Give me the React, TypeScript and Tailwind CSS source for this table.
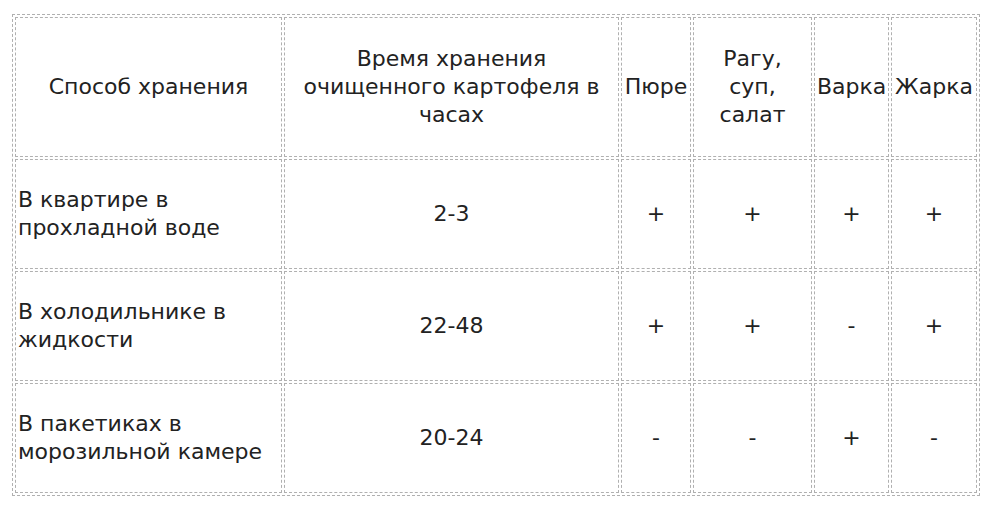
const header = [
  ["Способ хранения"],
  ["Время хранения", "очищенного картофеля в", "часах"],
  ["Пюре"],
  ["Рагу,", "суп,", "салат"],
  ["Варка"],
  ["Жарка"],
];

const rows = [
  { name: "В квартире в прохладной воде", time: "2-3", marks: ["+", "+", "+", "+"] },
  { name: "В холодильнике в жидкости", time: "22-48", marks: ["+", "+", "-", "+"] },
  { name: "В пакетиках в морозильной камере", time: "20-24", marks: ["-", "-", "+", "-"] },
];

const widths = ["w-[267px]", "w-[335px]", "w-[70px]", "w-[119px]", "w-[75px]", "w-[86px]"];

const cell = "border border-dashed border-[#b0b0b0] p-[2px]";

export default function App() {
  return (
    <div className="min-h-[512px] w-[1000px] bg-white pl-[12px] pt-[14px]">
      <table
        className="w-[968px] table-fixed border-separate border-spacing-[2px] border border-dashed border-[#b0b0b0] text-[22px] leading-[28px] text-[#222]"
        style={{ fontFamily: '"DejaVu Sans", Verdana, sans-serif' }}
      >
        <colgroup>
          {widths.map((w, i) => (
            <col key={i} className={w} />
          ))}
        </colgroup>
        <thead>
          <tr className="h-[140px]">
            {header.map((lines, i) => (
              <th key={i} className={`${cell} whitespace-nowrap text-center font-normal`}>
                {lines.map((l, j) => (
                  <div key={j}>{l}</div>
                ))}
              </th>
            ))}
          </tr>
        </thead>
        <tbody>
          {rows.map((r) => (
            <tr key={r.name} className="h-[110px]">
              <td className={`${cell} text-left`}>{r.name}</td>
              <td className={`${cell} text-center`}>{r.time}</td>
              {r.marks.map((m, i) => (
                <td key={i} className={`${cell} text-center`}>
                  {m}
                </td>
              ))}
            </tr>
          ))}
        </tbody>
      </table>
    </div>
  );
}
